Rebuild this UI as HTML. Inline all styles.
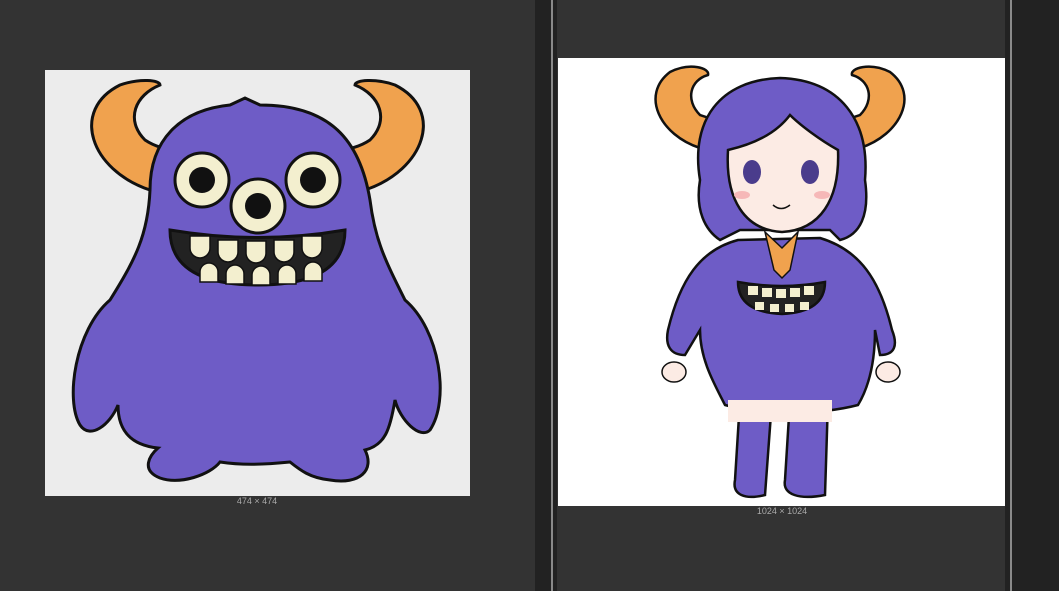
<!DOCTYPE html>
<html><head><meta charset="utf-8"><style>
html,body{margin:0;padding:0;width:1059px;height:591px;overflow:hidden;background:#333;font-family:"Liberation Sans",sans-serif}
.a{position:absolute}
.lbl{position:absolute;font-size:9px;color:#aaa;text-align:center}
</style></head><body>
<div class="a" style="left:535px;top:0;width:22px;height:591px;background:#222"></div>
<div class="a" style="left:551px;top:0;width:2px;height:591px;background:#8a8a8a"></div>
<div class="a" style="left:1005px;top:0;width:54px;height:591px;background:#222"></div>
<div class="a" style="left:1010px;top:0;width:2px;height:591px;background:#8a8a8a"></div>

<svg class="a" style="left:45px;top:70px" width="425" height="426" viewBox="45 70 425 426">
<rect x="45" y="70" width="425" height="426" fill="#ececec"/>
<g stroke="#111" stroke-width="3">
<path d="M150,190 C90,170 70,110 120,85 C140,78 160,80 160,85 C135,95 125,120 145,140 C160,150 175,150 180,150 Z" fill="#f0a24e"/>
<path d="M365,190 C425,170 445,110 395,85 C375,78 355,80 355,85 C380,95 390,120 370,140 C355,150 340,150 335,150 Z" fill="#f0a24e"/>
<path d="M150,190 C150,140 180,110 230,105 L245,98 L260,105 C330,105 360,140 370,200 C375,240 385,260 405,300 C440,330 450,400 430,430 C420,440 400,420 395,400 C390,430 385,445 365,450 C375,470 360,485 330,480 C310,478 300,470 290,462 C260,465 240,465 220,462 C210,475 180,485 160,478 C140,470 150,455 158,448 C130,445 118,430 118,405 C110,425 90,440 80,425 C65,400 75,330 110,300 C135,260 148,235 150,190 Z" fill="#6e5cc6"/>
<circle cx="202" cy="180" r="27" fill="#f3efcf"/>
<circle cx="258" cy="206" r="27" fill="#f3efcf"/>
<circle cx="313" cy="180" r="27" fill="#f3efcf"/>
<path d="M170,230 Q258,245 345,230 Q345,285 258,285 Q170,285 170,230 Z" fill="#222"/>
</g>
<circle cx="202" cy="180" r="13" fill="#111"/><circle cx="258" cy="206" r="13" fill="#111"/><circle cx="313" cy="180" r="13" fill="#111"/>
<g fill="#f3efcf" stroke="#111" stroke-width="1.5">
<path d="M190,236 h20 v12 a10,10 0 0 1 -20 0 Z"/><path d="M218,240 h20 v12 a10,10 0 0 1 -20 0 Z"/><path d="M246,241 h20 v12 a10,10 0 0 1 -20 0 Z"/><path d="M274,240 h20 v12 a10,10 0 0 1 -20 0 Z"/><path d="M302,236 h20 v12 a10,10 0 0 1 -20 0 Z"/>
<path d="M200,282 h18 v-10 a9,9 0 0 0 -18 0 Z"/><path d="M226,284 h18 v-10 a9,9 0 0 0 -18 0 Z"/><path d="M252,285 h18 v-10 a9,9 0 0 0 -18 0 Z"/><path d="M278,284 h18 v-10 a9,9 0 0 0 -18 0 Z"/><path d="M304,281 h18 v-10 a9,9 0 0 0 -18 0 Z"/>
</g>
</svg>
<div class="lbl" style="left:217px;top:496px;width:80px">474 × 474</div>

<svg class="a" style="left:558px;top:58px" width="447" height="448" viewBox="558 58 447 448">
<rect x="558" y="58" width="447" height="448" fill="#fff"/>
<g stroke="#111" stroke-width="2.5">
<path d="M700,148 C660,135 640,95 670,72 C690,62 710,68 708,75 C690,80 685,100 700,115 L715,120 Z" fill="#f0a24e"/>
<path d="M860,148 C900,135 920,95 890,72 C870,62 850,68 852,75 C870,80 875,100 860,115 L845,120 Z" fill="#f0a24e"/>
<path d="M740,400 L735,480 C732,495 745,500 765,495 L772,400 Z" fill="#6e5cc6"/>
<path d="M790,400 L785,480 C782,495 800,500 825,495 L828,400 Z" fill="#6e5cc6"/>
<path d="M738,240 C700,250 680,280 668,330 C665,345 670,355 685,355 L700,330 C700,360 715,385 725,405 C760,415 820,415 858,405 C870,385 875,360 875,330 L880,355 C895,355 898,345 892,330 C880,280 860,250 820,238 Z" fill="#6e5cc6"/>
<path d="M700,180 C690,120 720,80 780,78 C840,80 870,120 865,180 C870,215 860,235 840,240 L830,230 L740,230 L720,240 C705,230 695,210 700,180 Z" fill="#6e5cc6"/>
<path d="M728,150 C725,200 745,230 782,232 C820,230 840,200 838,150 C820,140 800,125 790,115 C775,135 750,145 728,150 Z" fill="#fcebe4"/>
<path d="M738,282 Q782,290 825,282 Q825,312 782,314 Q738,312 738,282 Z" fill="#222"/>
<path d="M765,232 L782,248 L798,232 L790,270 L782,278 L774,270 Z" fill="#f0a24e" stroke-width="1.5"/>
</g>
<ellipse cx="752" cy="172" rx="9" ry="12" fill="#4a3c8c"/><ellipse cx="810" cy="172" rx="9" ry="12" fill="#4a3c8c"/>
<ellipse cx="742" cy="195" rx="8" ry="4" fill="#f6b8b8"/><ellipse cx="822" cy="195" rx="8" ry="4" fill="#f6b8b8"/>
<path d="M773,205 Q781,212 790,205" stroke="#111" stroke-width="1.5" fill="none"/>
<ellipse cx="674" cy="372" rx="12" ry="10" fill="#fcebe4" stroke="#111" stroke-width="1.5"/>
<ellipse cx="888" cy="372" rx="12" ry="10" fill="#fcebe4" stroke="#111" stroke-width="1.5"/>
<rect x="728" y="400" width="104" height="22" fill="#fcebe4"/>
<g fill="#f3efcf"><rect x="748" y="286" width="10" height="9"/><rect x="762" y="288" width="10" height="9"/><rect x="776" y="289" width="10" height="9"/><rect x="790" y="288" width="10" height="9"/><rect x="804" y="286" width="10" height="9"/>
<rect x="755" y="302" width="9" height="8"/><rect x="770" y="304" width="9" height="8"/><rect x="785" y="304" width="9" height="8"/><rect x="800" y="302" width="9" height="8"/></g>
</svg>
<div class="lbl" style="left:740px;top:506px;width:84px">1024 × 1024</div>
</body></html>
